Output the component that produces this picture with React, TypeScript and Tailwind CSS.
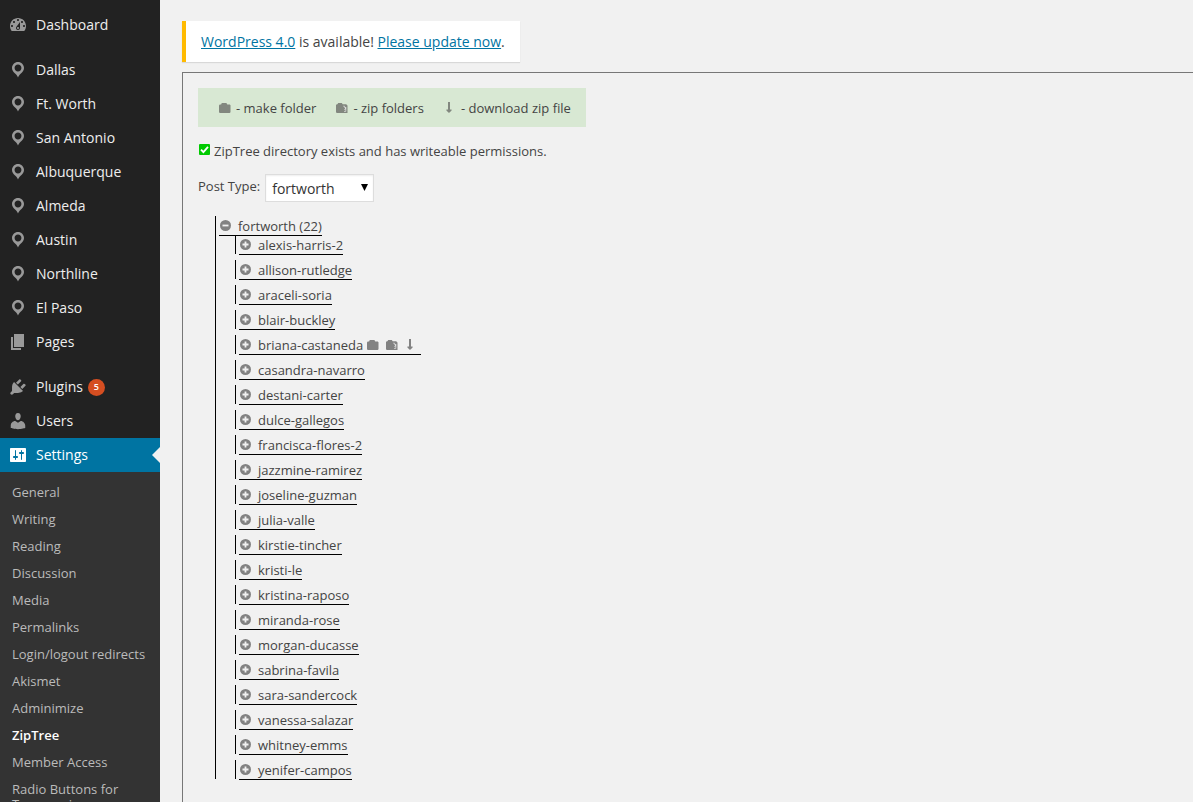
import { useState, type ReactNode } from "react";
import clsx from "clsx";

const PATHS = {
  dashboard:
    "M3.76 16h12.48c1.1-1.37 1.76-3.11 1.76-5 0-4.42-3.58-8-8-8s-8 3.58-8 8c0 1.89.66 3.63 1.76 5zM10 4c.55 0 1 .45 1 1s-.45 1-1 1-1-.45-1-1 .45-1 1-1zM6 6c.55 0 1 .45 1 1s-.45 1-1 1-1-.45-1-1 .45-1 1-1zm8 0c.55 0 1 .45 1 1s-.45 1-1 1-1-.45-1-1 .45-1 1-1zm-5.37 5.55L12 7v6c0 1.1-.9 2-2 2s-2-.9-2-2c0-.57.24-1.08.63-1.45zM4 10c.55 0 1 .45 1 1s-.45 1-1 1-1-.45-1-1 .45-1 1-1zm12 0c.55 0 1 .45 1 1s-.45 1-1 1-1-.45-1-1 .45-1 1-1zm-5 3c0-.55-.45-1-1-1s-1 .45-1 1 .45 1 1 1 1-.45 1-1z",
  location:
    "M10 2C6.69 2 4 4.69 4 8c0 2.02 1.17 3.71 2.53 4.89.43.37 1.18.96 1.85 1.83.74.97 1.41 2.01 1.62 2.71.21-.7.88-1.74 1.62-2.71.67-.87 1.42-1.46 1.85-1.83C14.83 11.71 16 10.02 16 8c0-3.31-2.69-6-6-6zm0 2.56c1.9 0 3.44 1.54 3.44 3.44S11.9 11.44 10 11.44 6.56 9.9 6.56 8 8.1 4.56 10 4.56z",
  pages: "M6 15V2h10v13H6zm-1 1h8v2H3V5h2v11z",
  plugins:
    "M13.11 4.36L9.87 7.6 8 5.73l3.24-3.24c.35-.34 1.05-.2 1.56.32.52.51.66 1.21.31 1.55zm-8 1.77l.91-1.12 9.01 9.01-1.19.84c-.71.71-2.63 1.16-3.82 1.16H6.14L4.9 17.26c-.59.59-1.54.59-2.12 0-.59-.58-.59-1.53 0-2.12l1.24-1.24v-3.88c0-1.13.4-3.19 1.09-3.89zm7.26 3.97l3.24-3.24c.34-.35 1.04-.21 1.55.31.52.51.66 1.21.31 1.55l-3.24 3.25z",
  users:
    "M10 9.25c-2.27 0-2.73-3.44-2.73-3.44C7 4.02 7.82 2 9.97 2c2.16 0 2.98 2.02 2.71 3.81 0 0-.41 3.44-2.68 3.44zm0 2.57L12.72 10c2.39 0 4.52 2.33 4.52 4.53v2.49s-3.65 1.13-7.24 1.13c-3.65 0-7.24-1.13-7.24-1.13v-2.49c0-2.25 1.94-4.48 4.47-4.48z",
  settings:
    "M18 16V4c0-.55-.45-1-1-1H3c-.55 0-1 .45-1 1v12c0 .55.45 1 1 1h14c.55 0 1-.45 1-1zM8 11h1c.55 0 1 .45 1 1s-.45 1-1 1H8v1.5c0 .28-.22.5-.5.5s-.5-.22-.5-.5V13H6c-.55 0-1-.45-1-1s.45-1 1-1h1V5.5c0-.28.22-.5.5-.5s.5.22.5.5V11zm5-2h-1c-.55 0-1-.45-1-1s.45-1 1-1h1V5.5c0-.28.22-.5.5-.5s.5.22.5.5V7h1c.55 0 1 .45 1 1s-.45 1-1 1h-1v5.5c0 .28-.22.5-.5.5s-.5-.22-.5-.5V9z",
};

type MenuItem = { label: string; icon: keyof typeof PATHS; count?: number };

const MENU_GROUPS: MenuItem[][] = [
  [{ label: "Dashboard", icon: "dashboard" }],
  [
    { label: "Dallas", icon: "location" },
    { label: "Ft. Worth", icon: "location" },
    { label: "San Antonio", icon: "location" },
    { label: "Albuquerque", icon: "location" },
    { label: "Almeda", icon: "location" },
    { label: "Austin", icon: "location" },
    { label: "Northline", icon: "location" },
    { label: "El Paso", icon: "location" },
    { label: "Pages", icon: "pages" },
  ],
  [
    { label: "Plugins", icon: "plugins", count: 5 },
    { label: "Users", icon: "users" },
    { label: "Settings", icon: "settings" },
  ],
];

const SUBMENU = [
  "General",
  "Writing",
  "Reading",
  "Discussion",
  "Media",
  "Permalinks",
  "Login/logout redirects",
  "Akismet",
  "Adminimize",
  "ZipTree",
  "Member Access",
  "Radio Buttons for Taxonomies",
];

const FOLDERS = [
  "alexis-harris-2",
  "allison-rutledge",
  "araceli-soria",
  "blair-buckley",
  "briana-castaneda",
  "casandra-navarro",
  "destani-carter",
  "dulce-gallegos",
  "francisca-flores-2",
  "jazzmine-ramirez",
  "joseline-guzman",
  "julia-valle",
  "kirstie-tincher",
  "kristi-le",
  "kristina-raposo",
  "miranda-rose",
  "morgan-ducasse",
  "sabrina-favila",
  "sara-sandercock",
  "vanessa-salazar",
  "whitney-emms",
  "yenifer-campos",
];

function FolderIcon() {
  return (
    <svg viewBox="0 0 12 12" className="size-3 shrink-0 fill-current" aria-hidden="true">
      <path d="M0 3.6l.7-1h1.4L2.8 1h4.6l.9 1.4h2.5l.7.8v7l-.8.8H.8l-.8-.8z" />
    </svg>
  );
}

function ZipIcon() {
  return (
    <svg viewBox="0 0 12 12" className="size-3 shrink-0 fill-current" aria-hidden="true">
      <path d="M0 3l.8-.8h.6L2.2 1h3.6l.9 1.2h3.5L11.5 3.4v7.6H.8l-.8-.8z" />
      <path
        d="M7.2 4.2h1.4v1.3h1v1.5h-.8v.9M9.8 5v4.4H8"
        className="stroke-white/70"
        strokeWidth=".8"
        fill="none"
      />
    </svg>
  );
}

function DownloadIcon() {
  return (
    <svg viewBox="0 0 12 12" className="size-3 shrink-0 fill-current" aria-hidden="true">
      <path d="M4 0h2v7.6h1.6V8.4L5 11 2.4 8.4v-.8H4z" />
    </svg>
  );
}

function ToggleIcon({ open }: { open?: boolean }) {
  return (
    <svg viewBox="0 0 11 11" className="size-[11px] shrink-0" aria-hidden="true">
      <circle cx="5.5" cy="5.5" r="5.5" fill="#828282" />
      <path d={open ? "M2.5 5.5h6" : "M2.5 5.5h6M5.5 2.5v6"} stroke="#f1f1f1" strokeWidth="1.8" />
    </svg>
  );
}

function Sidebar() {
  return (
    <nav aria-label="Main menu" className="w-40 shrink-0 overflow-hidden bg-[#222] pt-2">
      <div className="flex flex-col gap-[11px]">
        {MENU_GROUPS.map((group, i) => (
          <ul key={i}>
            {group.map(({ label, icon, count }) => {
              const current = label === "Settings";
              return (
                <li key={label}>
                  <a
                    href="#"
                    className={clsx(
                      "relative flex h-[34px] items-center gap-2 pl-2 text-sm",
                      current ? "bg-[#0074a2] text-white" : "text-[#eee] hover:text-[#2ea2cc]"
                    )}
                  >
                    <svg
                      viewBox="0 0 20 20"
                      className={clsx("size-5", current ? "fill-white" : "fill-[#999]")}
                      aria-hidden="true"
                    >
                      <path fillRule="evenodd" d={PATHS[icon]} />
                    </svg>
                    <span>{label}</span>
                    {count && (
                      <span className="-ml-[3px] flex size-[17px] items-center justify-center rounded-full bg-[#d54e21] text-[9px] font-semibold text-white">
                        {count}
                      </span>
                    )}
                    {current && (
                      <span className="absolute top-[9px] right-0 border-y-8 border-r-8 border-y-transparent border-r-[#f1f1f1]" />
                    )}
                  </a>
                </li>
              );
            })}
          </ul>
        ))}
      </div>
      <ul className="bg-[#333] py-[7px]">
        {SUBMENU.map((label) => (
          <li key={label}>
            <a
              href="#"
              className={clsx(
                "block px-3 py-1.5 text-[13px] leading-[15px]",
                label === "ZipTree" ? "font-semibold text-white" : "text-[#bbb] hover:text-[#2ea2cc]"
              )}
            >
              {label}
            </a>
          </li>
        ))}
      </ul>
    </nav>
  );
}

function LegendItem({ icon, children }: { icon: ReactNode; children: ReactNode }) {
  return (
    <span className="flex items-center gap-[5px]">
      <span className="text-[#82877f]">{icon}</span>
      <span className="pt-0.5">{children}</span>
    </span>
  );
}

function FolderRow({ name, active }: { name: string; active: boolean }) {
  return (
    <li className="mb-1.5 flex h-[19px] border-l border-black pl-[3px] last:mb-0">
      <div className="flex h-5 items-center border-b border-black">
        <button type="button" className="flex items-center gap-[7px] pl-px">
          <ToggleIcon />
          <span className="pt-0.5">{name}</span>
        </button>
        {active && (
          <span className="flex gap-[7px] pr-1 pl-1 text-[#828282]">
            <button type="button" aria-label="make folder">
              <FolderIcon />
            </button>
            <button type="button" aria-label="zip folders">
              <ZipIcon />
            </button>
            <button type="button" aria-label="download zip file">
              <DownloadIcon />
            </button>
          </span>
        )}
      </div>
    </li>
  );
}

export default function App() {
  const [postType, setPostType] = useState("fortworth");

  return (
    <div className="flex h-screen overflow-hidden bg-[#f1f1f1] font-['Open_Sans',sans-serif] text-[13px] text-[#444]">
      <Sidebar />
      <main className="flex min-w-0 flex-1 flex-col items-start pt-[21px] pl-[22px]">
        <p className="border-l-4 border-[#ffba00] bg-white px-[15px] py-[11px] text-sm leading-[19px] shadow-[0_1px_1px_rgba(0,0,0,0.1)]">
          <a href="#" className="text-[#0074a2] underline">
            WordPress 4.0
          </a>{" "}
          is available!{" "}
          <a href="#" className="text-[#0074a2] underline">
            Please update now
          </a>
          .
        </p>

        <section className="mt-2.5 w-full flex-1 border-t border-l border-[#777] p-[15px]">
          <div className="flex h-[39px] w-fit items-center gap-5 bg-[#d8e8d3] pr-[15px] pl-[21px]">
            <LegendItem icon={<FolderIcon />}>- make folder</LegendItem>
            <LegendItem icon={<ZipIcon />}>- zip folders</LegendItem>
            <LegendItem icon={<DownloadIcon />}>- download zip file</LegendItem>
          </div>

          <div className="mt-3.5 flex h-5 items-start gap-1 pl-px leading-5">
            <span className="relative mt-[3px] size-[11px]">
              <input
                id="writeable"
                type="checkbox"
                checked
                readOnly
                className="block size-[11px] appearance-none rounded-[1px] bg-[#00ca00]"
              />
              <svg viewBox="0 0 11 11" className="pointer-events-none absolute inset-0" aria-hidden="true">
                <path d="M2 5.6l2.4 2.5L9 2.8" fill="none" stroke="#fff" strokeWidth="1.8" />
              </svg>
            </span>
            <label htmlFor="writeable">ZipTree directory exists and has writeable permissions.</label>
          </div>

          <div className="mt-[13px] flex gap-[5px]">
            <label htmlFor="post-type" className="leading-6">
              Post Type:
            </label>
            <div className="relative">
              <select
                id="post-type"
                value={postType}
                onChange={(e) => setPostType(e.target.value)}
                className="block h-7 w-[109px] appearance-none border border-[#ddd] bg-white px-1.5 pt-0.5 text-sm text-[#333] shadow-[inset_0_1px_2px_rgba(0,0,0,0.07)]"
              >
                <option>fortworth</option>
                <option>dallas</option>
              </select>
              <svg
                viewBox="0 0 7 7"
                className="pointer-events-none absolute top-2.5 right-1.5 size-[7px]"
                aria-hidden="true"
              >
                <path d="M0 0h7L3.5 7z" />
              </svg>
            </div>
          </div>

          <div className="mt-3.5 ml-[17px] border-l border-black pl-[3px]">
            <div className="flex h-[19px]">
              <button
                type="button"
                className="flex h-5 items-center gap-[7px] border-b border-black pl-px"
              >
                <ToggleIcon open />
                <span className="pt-0.5">fortworth (22)</span>
              </button>
            </div>
            <ul className="ml-4">
              {FOLDERS.map((name) => (
                <FolderRow key={name} name={name} active={name === "briana-castaneda"} />
              ))}
            </ul>
          </div>
        </section>
      </main>
    </div>
  );
}
